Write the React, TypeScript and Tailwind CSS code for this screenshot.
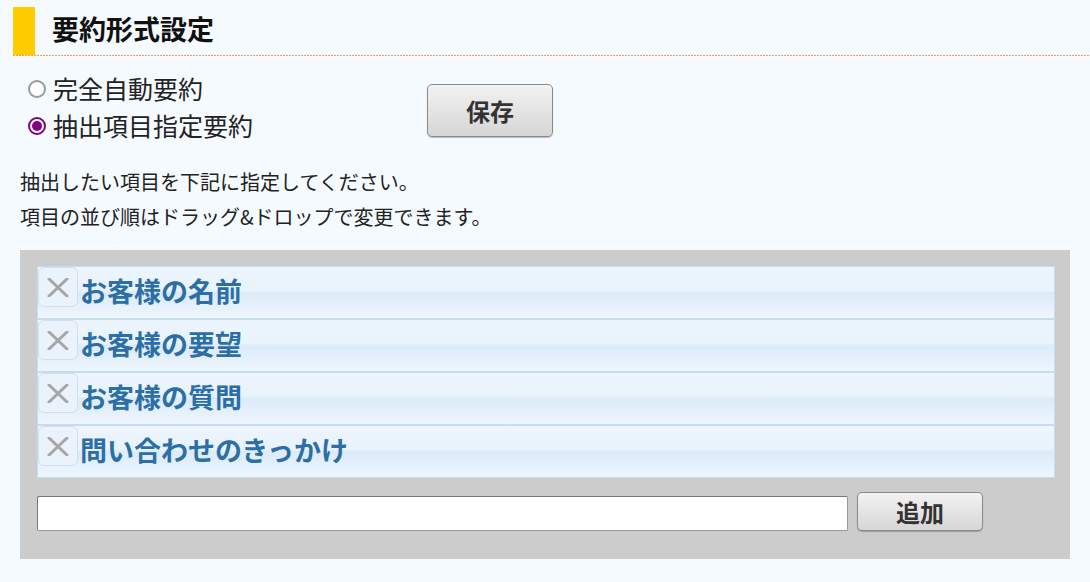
import React, { useState } from 'react';

const items = ['お客様の名前', 'お客様の要望', 'お客様の質問', '問い合わせのきっかけ'];

function Radio({ checked }: { checked: boolean }) {
  return checked ? (
    <span className="w-[18px] h-[18px] rounded-full border-2 border-[#800080] bg-white flex items-center justify-center shrink-0">
      <span className="w-[10px] h-[10px] rounded-full bg-[#800080]" />
    </span>
  ) : (
    <span className="w-[18px] h-[18px] rounded-full border-2 border-[#9a9a9a] bg-white shrink-0" />
  );
}

function RemoveButton() {
  return (
    <span className="w-[40px] h-[40px] shrink-0 self-start rounded-[6px] border border-[#d3dfea] bg-[#eaf3fb] flex items-start justify-center pt-[10px]">
      <svg width="22" height="19" viewBox="0 0 22 19">
        <path d="M2 1 L20 18 M20 1 L2 18" stroke="#a6a6a6" strokeWidth="3" strokeLinecap="round" />
      </svg>
    </span>
  );
}

export default function App() {
  const [mode, setMode] = useState('extract');

  return (
    <div className="w-[1090px] h-[582px] bg-[#f5faff] overflow-hidden text-[#222] font-['Noto_Sans_CJK_JP','Noto_Sans',sans-serif]">
      <div className="ml-[13px] pt-[7px]">
        <div className="flex h-[48px]">
          <div className="w-[22px] bg-[#ffcc00]" />
          <h1 className="pl-[17px] pb-[5px] flex items-center text-[27px] font-bold text-[#111] leading-none">要約形式設定</h1>
        </div>
        <div className="h-px bg-[repeating-linear-gradient(to_right,#f39a4c_0px,#f39a4c_2px,transparent_2px,transparent_3px)]" />
      </div>

      <div className="flex pl-[28px] pt-[14px]">
        <div className="w-[399px]">
          <label className="flex items-center gap-[7px] h-[37px] text-[25px] leading-none cursor-pointer" onClick={() => setMode('auto')}>
            <Radio checked={mode === 'auto'} />
            完全自動要約
          </label>
          <label className="flex items-center gap-[7px] h-[37px] text-[25px] leading-none cursor-pointer" onClick={() => setMode('extract')}>
            <Radio checked={mode === 'extract'} />
            抽出項目指定要約
          </label>
        </div>
        <button className="mt-[14px] w-[126px] h-[53px] rounded-[5px] border border-[#8a8a8a] bg-[linear-gradient(to_bottom,#f2f2f2,#d6d6d6)] shadow-[0_1px_1px_rgba(0,0,0,0.25)] text-[24px] font-bold text-[#333]">
          保存
        </button>
      </div>

      <div className="pl-[20px] pt-[20px] text-[20px] leading-[35px]">
        <p>抽出したい項目を下記に指定してください。</p>
        <p>項目の並び順はドラッグ&amp;ドロップで変更できます。</p>
      </div>

      <div className="ml-[20px] mt-[16px] w-[1050px] h-[309px] bg-[#cccccc] pl-[17px] pr-[15px] pt-[16px]">
        <ul>
          {items.map((item) => (
            <li
              key={item}
              className="h-[53px] flex items-center border border-[#c6dcf0] bg-[linear-gradient(to_bottom,#ecf5fd_0%,#e9f3fc_46%,#dcebf9_50%,#e1eefa_66%,#eef6fd_100%)]"
            >
              <RemoveButton />
              <span className="pl-[2px] pb-[5px] text-[27px] font-bold text-[#2c6ea6] leading-none">{item}</span>
            </li>
          ))}
        </ul>
        <div className="flex items-end gap-[9px] mt-[14px]">
          <input
            type="text"
            className="w-[811px] h-[35px] bg-white border border-[#999] border-t-[#777] border-l-[#777] rounded-[2px] px-2 text-[18px] outline-none"
          />
          <button className="w-[126px] h-[39px] rounded-[5px] border border-[#8a8a8a] bg-[linear-gradient(to_bottom,#f2f2f2,#d6d6d6)] shadow-[0_1px_1px_rgba(0,0,0,0.25)] text-[24px] font-bold text-[#333] leading-none">
            追加
          </button>
        </div>
      </div>
    </div>
  );
}
